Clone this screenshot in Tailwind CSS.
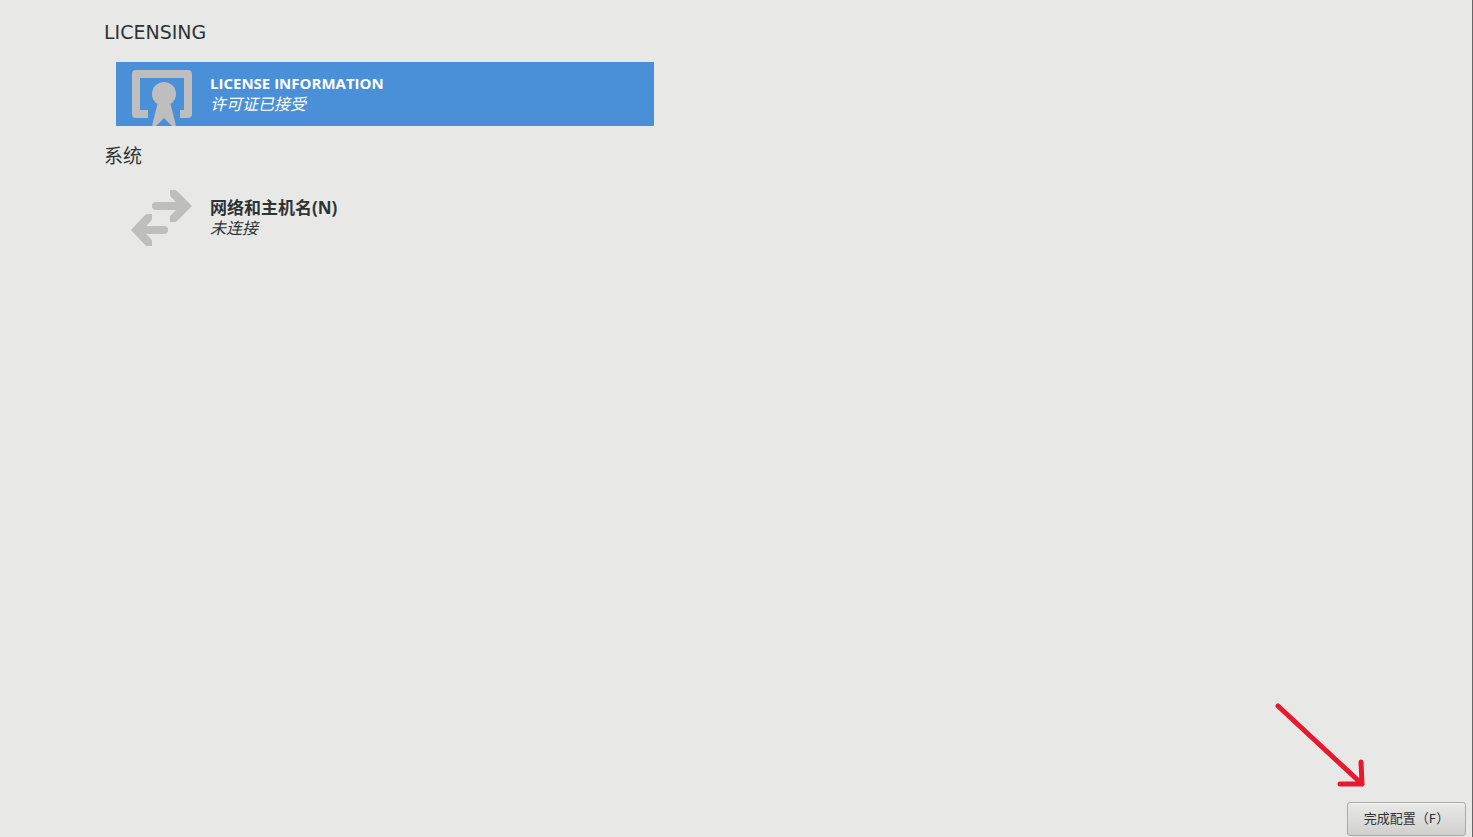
<!DOCTYPE html>
<html lang="zh-CN">
<head>
<meta charset="utf-8">
<meta name="viewport" content="width=device-width, initial-scale=1">
<title>初始设置</title>
<script src="https://cdn.jsdelivr.net/npm/@tailwindcss/browser@4"></script>
</head>
<body class="flex min-h-screen flex-col border-r border-[#666666] bg-[#e8e8e6] font-['DejaVu_Sans','Noto_Sans_CJK_SC',sans-serif] text-[#2e3436]">
<main class="flex-1 pt-[18px] pl-[104px]">
  <section>
    <h1 class="text-[19px] leading-7">LICENSING</h1>
    <button type="button" class="mt-4 ml-3 flex h-16 w-full max-w-[538px] bg-[#4a90d9] pl-3 text-left text-white">
      <svg class="h-16 w-16 shrink-0" viewBox="0 0 64 64" fill="#bebebe" aria-hidden="true">
        <path d="M8 8h52q4 0 4 4v40q0 4-4 4h-8v-8h4V16H12v32h8v8H8q-4 0-4-4V12q0-4 4-4z"/>
        <circle cx="36" cy="32" r="12"/>
        <path d="M30 40h12l6 24h-4l-8-8-8 8h-4z"/>
      </svg>
      <span class="ml-[18px] flex flex-col pt-[11px]">
        <span class="font-['Open_Sans','Noto_Sans_CJK_SC',sans-serif] text-[15px] leading-[21px] font-bold">LICENSE INFORMATION</span>
        <span class="text-base leading-[21px] italic">许可证已接受</span>
      </span>
    </button>
  </section>
  <section class="mt-4">
    <h1 class="text-[19px] leading-7">系统</h1>
    <button type="button" class="mt-4 ml-3 flex h-16 w-full max-w-[538px] pl-3 text-left">
      <svg class="h-16 w-16 shrink-0" viewBox="0 0 64 64" fill="#bebebe" aria-hidden="true">
        <path d="M42 4h4q2 0 3 1l15 15-15 15q-1 1-3 1h-4v-4q0-2 1-3l5-5H28a4 4 0 0 1 0-8h20l-5-5q-1-1-1-3z"/>
        <path d="M24 28h-4q-2 0-3 1L3 44l14 15q1 1 3 1h4v-4q0-2-1-3l-5-5h18a4 4 0 0 0 0-8H18l5-5q1-1 1-3z"/>
      </svg>
      <span class="ml-[18px] flex flex-col pt-[11px]">
        <span class="font-['Open_Sans','Noto_Sans_CJK_SC',sans-serif] text-[17px] leading-[21px] font-bold">网络和主机名(N)</span>
        <span class="text-base leading-[21px] italic">未连接</span>
      </span>
    </button>
  </section>
</main>
<footer class="flex justify-end pr-[6px] pb-px">
  <div class="relative">
    <svg class="pointer-events-none absolute right-[100px] bottom-[46px] h-[88px] w-[92px]" viewBox="0 0 92 88" fill="none" stroke="#e6192e" stroke-width="5" stroke-linecap="round" stroke-linejoin="round" aria-hidden="true">
      <path d="M4 4l84 78M87 60l1 22h-22"/>
    </svg>
    <button type="button" class="h-[34px] w-[119px] rounded-[3px] border border-[#a9aaa6] bg-linear-to-b from-[#e9e9e7] to-[#d0d0ce] text-[13px] whitespace-nowrap shadow-[inset_0_1px_0_#f5f5f4]">完成配置（F）</button>
  </div>
</footer>
</body>
</html>
